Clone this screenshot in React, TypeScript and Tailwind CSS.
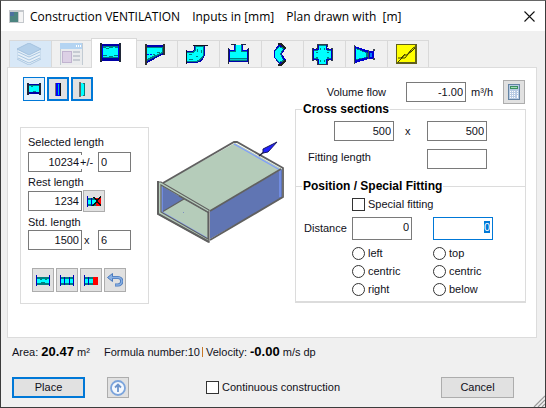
import { ReactNode, useState } from 'react'
import clsx from 'clsx'

type IconProps = { className?: string }

const StraightIcon = ({ className = 'h-[19px] w-[21px]' }: IconProps) => (
  <svg viewBox="0 0 21 19" className={className} shapeRendering="crispEdges">
    <path d="M1 1h19v17H1z" fill="#0000a8" />
    <path d="M2 3h17v12H2z" fill="#008080" />
    <path d="M2 4h17v10H2z" fill="#00ffff" />
    <path d="M3 4h3v1H3zM9 4h4v1H9zM15 4h3v1h-3zM6 5h3v1H6zM3 12h4v1H3zM9 13h4v1H9zM14 12h4v1h-4z" fill="#008080" />
    <path d="M0 0h2v19H0zM19 0h2v19h-2z" fill="#202838" />
    <path d="M2 3h1v12H2zM18 3h1v12h-1z" fill="#0000ff" />
  </svg>
)

const ReducerIcon = () => (
  <svg viewBox="0 0 20 21" className="h-[21px] w-5" shapeRendering="crispEdges">
    <path d="M1 1h18v9L2 19z" fill="#0000b0" />
    <path d="M2 3h16v6L2 17z" fill="#008080" />
    <path d="M2 4h15v4L2 15z" fill="#00ffff" />
    <path d="M2 10h2v1H2zM5 10h2v1H5z" fill="#0000ff" />
    <path d="M8 10h2v1H8zM12 8h3v1h-3zM9 3h4v1H9z" fill="#008080" />
    <path d="M0 0h2v21H0zM18 0h2v11h-2z" fill="#303030" />
  </svg>
)

const BendIcon = () => (
  <svg viewBox="0 0 22 19" className="h-[19px] w-[22px]" shapeRendering="crispEdges">
    <path d="M8 1h11v9l-2 4-3 3-4 1H1V6h5l2-2z" fill="#0000b0" />
    <path d="M9 1h9v9l-2 4-3 2-3 1H1V7h5l3-2z" fill="#008080" />
    <path d="M10 2h7v8l-2 3-3 2-3 1H1V8h6l3-2z" fill="#00ffff" />
    <path d="M3 9h3v1H3zM3 14h4v1H3zM11 4h1v3h-1zM15 5h1v3h-1zM10 11h2v1h-2z" fill="#008080" />
    <path d="M7 0h15v1H7zM0 5h1v14H0z" fill="#101020" />
  </svg>
)

const TeeIcon = () => (
  <svg viewBox="0 0 21 20" className="h-5 w-[21px]" shapeRendering="crispEdges">
    <path d="M6 1h9v5h5v12H1V6h5z" fill="#008080" />
    <path d="M8 1h5v7h6v6H2V8h6z" fill="#00ffff" />
    <path d="M2 15h17v1H2z" fill="#00c8c8" />
    <path d="M6 1h1v5H6zM14 1h1v5h-1zM2 6h5v1H2zM14 6h5v1h-5z" fill="#0000e0" />
    <path d="M2 17h17v1H2z" fill="#0000a8" />
    <path d="M0 4h1v16H0zM20 4h1v16h-1zM3 0h5v1H3zM13 0h5v1h-5z" fill="#202840" />
    <path d="M1 5h1v13H1zM19 5h1v13h-1z" fill="#0000c0" />
  </svg>
)

const YPieceIcon = () => (
  <svg viewBox="0 0 13 23" className="h-[23px] w-[13px]" shapeRendering="crispEdges">
    <path d="M5 1h3l4 4-4 6 4 6-4 4H5l-5-7V8z" fill="#0000c0" />
    <path d="M5 3l5 2-3 6 3 7-5 2-4-6V8z" fill="#008080" />
    <path d="M5 4l4 2-3 5 3 6-4 2-4-5V8z" fill="#00ffff" />
    <path d="M4 0h3l5 4v2h-2L6 2H4zM4 23h3l5-4v-2h-2l-4 4H4z" fill="#202020" />
  </svg>
)

const CrossIcon = () => (
  <svg viewBox="0 0 21 21" className="h-[21px] w-[21px]" shapeRendering="crispEdges">
    <path d="M5 0h11v3h-1v1h2v1h2V4h2v13h-2v-1h-2v1h-1v4H5v-4H4v-1H2v1H0V4h2v1h2V4h1z" fill="#303848" />
    <path d="M6 1h9v4h5v11h-5v4H6v-4H1V5h5z" fill="#0000c8" />
    <path d="M7 1h7v5h5v9h-5v5H7v-5H2V6h5z" fill="#008080" />
    <path d="M7 2h7v4h1v1h4v7h-4v1h-1v5H7v-5H6v-1H2V7h4V6h1z" fill="#00ffff" />
    <path d="M8 4h1v2H8zM12 4h1v2h-1zM4 8h2v1H4zM15 8h2v1h-2zM4 13h2v1H4zM15 13h2v1h-2zM8 16h1v2H8zM12 16h1v2h-1z" fill="#008080" />
  </svg>
)

const ConeIcon = () => (
  <svg viewBox="0 0 21 19" className="h-[19px] w-[21px]" shapeRendering="crispEdges">
    <path d="M1 1l14 5h5v8h-5L1 18z" fill="#0000d0" />
    <path d="M2 3l12 5v4L2 15z" fill="#008080" />
    <path d="M2 4l10 4v4L2 14z" fill="#00ffff" />
    <path d="M16 8h2v4h-2z" fill="#0080ff" />
    <path d="M0 0h1v19H0zM14 5h1v9h-1zM19 4h2v2h-2zM19 13h2v2h-2z" fill="#404850" />
  </svg>
)

const DamperIcon = () => (
  <svg viewBox="0 0 21 20" className="h-5 w-[21px]">
    <path d="M0 0h21v20H0z" fill="#60601c" />
    <path d="M1 1h18v17H1z" fill="#ffff00" />
    <path d="M2 14h3l3-3h3l6-7 2-1M2 18l4-4h3l4-5 2-1 4-4M6 14l3-4M12 10l3-4" fill="none" stroke="#3c3c00" />
  </svg>
)

const LayersIcon = () => (
  <svg viewBox="0 0 24 22" className="h-[22px] w-6">
    <path d="M0 6v10l12 6 12-6V6L12 11z" fill="#e6f0f8" stroke="#adc8e2" />
    <path d="M0 6l12-6 12 6-12 6z" fill="#b4d0ea" stroke="#a4c2df" />
    <path d="M1 9l11 5 11-5M1 12l11 5 11-5M1 15l11 5 11-5" fill="none" stroke="#a9c6e2" />
  </svg>
)

const FormIcon = () => (
  <svg viewBox="0 0 24 22" className="h-[22px] w-6" shapeRendering="crispEdges">
    <path d="M1 0h22v22H1z" fill="#e9ebed" stroke="#c2cbd3" />
    <path d="M1 0h22v6H1z" fill="#b4d4f2" />
    <path d="M17 2h1v2h-1zM19 2h1v2h-1zM21 2h1v2h-1z" fill="#fff" />
    <path d="M3 8h9v11H3z" fill="#dcd0e5" stroke="#c1b3d0" />
    <path d="M14 8h7v2h-7zM14 12h7v2h-7zM14 16h7v2h-7z" fill="#c6cbd2" />
  </svg>
)

const PlateIcon = ({ wide }: { wide?: boolean }) => (
  <svg viewBox="0 0 6 15" className="h-[15px] w-[6px]" shapeRendering="crispEdges">
    <path d={wide ? 'M0 0h2v15H0z' : 'M0 1h1v13H0z'} fill="#707070" />
    <path d="M1 1h4v13H1z" fill={wide ? '#00ffff' : '#0000ff'} />
    <path d={wide ? 'M1 1h1v13H1zM4 1h1v1H4zM4 13h1v1H4z' : 'M3 2h1v11H3z'} fill={wide ? '#606060' : '#00c0c0'} />
    <path d="M5 1h1v13H5z" fill={wide ? '#008080' : '#101010'} />
  </svg>
)

const DuctIcon = ({ kind }: { kind: 'full' | 'split' | 'rest' | 'none' }) => (
  <svg viewBox="0 0 14 11" className="h-[11px] w-[14px]" shapeRendering="crispEdges">
    <path d="M0 2h14v8H0z" fill="#008080" />
    <path d="M1 4h12v4H1z" fill="#00ffff" />
    {kind === 'full' && <path d="M4 4h2v1H4zM9 4h2v1H9zM5 7h4v1H5z" fill="#008080" />}
    {kind !== 'full' && <path d="M4 2h1v8H4zM9 2h1v8H9z" fill="#0000c0" />}
    {(kind === 'rest' || kind === 'none') && <path d="M9 2h5v8H9z" fill="#ff0000" />}
    <path d="M0 0h1v11H0z" fill="#0000c0" />
    {(kind === 'full' || kind === 'split') && <path d="M13 0h1v11h-1z" fill="#0000c0" />}
    {kind === 'none' && <path d="M7 1l7 9M14 0L6 10" stroke="#101010" strokeWidth="1.5" />}
  </svg>
)

const UndoIcon = () => (
  <svg viewBox="0 0 16 14" className="h-[14px] w-4">
    <path d="M5 4.5h6a3.5 3.5 0 0 1 0 7.5H8" fill="none" stroke="#4878bc" strokeWidth="3.2" />
    <path d="M0.5 4.5L5.5 0.5v8z" fill="#88b0e4" stroke="#4878bc" />
    <path d="M4 4.5h7a3.5 3.5 0 0 1 0 7.5H8.5" fill="none" stroke="#88b0e4" strokeWidth="1.5" />
  </svg>
)

const CalculatorIcon = () => (
  <svg viewBox="0 0 12 16" className="h-4 w-3" shapeRendering="crispEdges">
    <path d="M0 0h12v16H0z" fill="#6484a4" />
    <path d="M1 1h10v14H1z" fill="#b8cce4" />
    <path d="M2 2h8v3H2z" fill="#3c9060" />
    <path d="M3 3h6v1H3z" fill="#a8dcb8" />
    <path d="M2 7h1v1H2zM4 7h1v1H4zM6 7h1v1H6zM9 7h1v1H9zM2 9h1v1H2zM4 9h1v1H4zM6 9h1v1H6zM9 9h1v1H9zM2 11h1v1H2zM4 11h1v1H4zM6 11h1v1H6zM9 11h1v3H9zM2 13h1v1H2zM4 13h1v1H4zM6 13h1v1H6z" fill="#fff" />
  </svg>
)

const UpIcon = () => (
  <svg viewBox="0 0 16 16" className="size-4">
    <circle cx="8" cy="8" r="7" fill="#f4f8fd" stroke="#7ba4dc" strokeWidth="1.8" />
    <path d="M8 12V5M5 7.5L8 4.5l3 3" fill="none" stroke="#6c94cc" strokeWidth="1.8" />
  </svg>
)

const DuctDrawing = () => (
  <svg viewBox="11 12 130 104" className="h-[104px] w-[130px] flex-none">
    <path d="M17 54L89 14l47 26-72 42z" fill="#b5ccba" />
    <path d="M64 82l72-42v29l-72 41z" fill="#6075b3" />
    <path d="M15 55l48 28v27L15 83z" fill="#b5ccba" />
    <path d="M16 57l22 13-22 13z" fill="#6075b3" />
    <path d="M16 83l22-13" stroke="#606060" strokeWidth="1.2" />
    <path d="M33 67l30 17" stroke="#606060" strokeWidth="1.2" />
    <path d="M16 56v27l45 26M88 15l46 26v27" fill="none" stroke="#7d9cff" strokeWidth="1.2" />
    <path d="M17 54L88 13h3l46 26v29l-73 43M64 82l71-42" fill="none" stroke="#606060" strokeWidth="1.8" />
    <path d="M12 53l3 0 48 28v32L12 85zM15 56v27l47 27V83z" fill="#b5ccba" fillRule="evenodd" stroke="#606060" strokeWidth="1.2" />
    <path d="M12 52v33l51 28" fill="none" stroke="#606060" strokeWidth="2" />
    <path d="M113 27l6-5" stroke="#202040" strokeWidth="1.5" />
    <path d="M117 20l14-7-9 10-5 1z" fill="#2020ff" stroke="#181860" />
    <path d="M37 83h1v1h-1z" fill="#7d90c0" />
  </svg>
)

const tabs: { name: string; icon: ReactNode }[] = [
  { name: 'Layers', icon: <LayersIcon /> },
  { name: 'Properties', icon: <FormIcon /> },
  { name: 'Straight duct', icon: <StraightIcon /> },
  { name: 'Reducer', icon: <ReducerIcon /> },
  { name: 'Bend', icon: <BendIcon /> },
  { name: 'Tee', icon: <TeeIcon /> },
  { name: 'Branch', icon: <YPieceIcon /> },
  { name: 'Cross', icon: <CrossIcon /> },
  { name: 'Cone', icon: <ConeIcon /> },
  { name: 'Damper', icon: <DamperIcon /> },
]

const IconButton = ({ label, className, children }: { label: string; className?: string; children: ReactNode }) => (
  <button
    type="button"
    aria-label={label}
    className={clsx('flex w-[22px] flex-none items-center justify-center', className ?? 'h-6 border border-[#adadad] bg-[#e1e1e1]')}
  >
    {children}
  </button>
)

const field = 'h-5 border border-[#7a7a7a] bg-white px-0.5 outline-none'

const Radios = ({ name, options }: { name: string; options: string[] }) => (
  <div className="flex w-[81px] flex-col gap-[5px]">
    {options.map((option) => (
      <label key={option} className="flex h-[13px] items-center gap-[3px]">
        <input type="radio" name={name} className="size-[13px] appearance-none rounded-full border border-[#333] bg-white checked:border-4" />
        {option}
      </label>
    ))}
  </div>
)

const Checkbox = ({ label }: { label: string }) => (
  <label className="flex h-[13px] items-center gap-[3px]">
    <input type="checkbox" className="size-[13px] appearance-none border border-[#333] bg-white checked:bg-[#0078d7]" />
    {label}
  </label>
)

const TitleBar = () => (
  <header className="flex h-[30px] items-center bg-white px-2 font-['Open_Sans',sans-serif] text-[12px] text-black">
    <svg viewBox="0 0 15 13" className="mr-[6px] h-[13px] w-[15px]" shapeRendering="crispEdges">
      <path d="M0 0h15v13H0z" fill="#c4c8cc" />
      <path d="M1 2h8v10H1z" fill="#4c8480" />
      <path d="M1 2h4v4H1z" fill="#4c70a0" />
      <path d="M10 2h4v10h-4z" fill="#f4f4f4" />
    </svg>
    <h1 className="flex flex-1 gap-3 whitespace-pre">
      <span>Construction VENTILATION</span>
      <span>Inputs in [mm]</span>
      <span>Plan drawn with  [m]</span>
    </h1>
    <button type="button" aria-label="Close" className="p-0.5">
      <svg viewBox="0 0 11 11" className="size-[11px]">
        <path d="M0.5 0.5l10 10M10.5 0.5l-10 10" stroke="#111" strokeWidth="1.1" />
      </svg>
    </button>
  </header>
)

const LengthPanel = () => (
  <section className="mt-[26px] border border-[#dcdcdc] pt-2 pr-[17px] pb-[11px] pl-[7px]">
    <label htmlFor="selected" className="block h-4 leading-[12px]">Selected length</label>
    <div className="flex items-center">
      <input id="selected" defaultValue="10234" className={clsx(field, 'w-[54px] text-right')} />
      <label htmlFor="tolerance" className="relative -ml-0.5 w-[18px] bg-white leading-[14px]">+/-</label>
      <input id="tolerance" defaultValue="0" className={clsx(field, 'w-[33px]')} />
    </div>
    <label htmlFor="rest" className="mt-1 block h-[14px] leading-[12px]">Rest length</label>
    <div className="flex items-center gap-px">
      <input id="rest" defaultValue="1234" className={clsx(field, 'w-[54px] text-right')} />
      <IconButton label="Remove rest" className="h-[22px] border border-[#adadad] bg-[#e1e1e1]">
        <DuctIcon kind="none" />
      </IconButton>
    </div>
    <label htmlFor="std" className="mt-1 block h-[14px] leading-[12px]">Std. length</label>
    <div className="flex items-center">
      <input id="std" defaultValue="1500" className={clsx(field, 'w-[54px] text-right')} />
      <label htmlFor="count" className="w-4 pl-0.5">x</label>
      <input id="count" defaultValue="6" className={clsx(field, 'w-[33px]')} />
    </div>
    <div className="mt-[18px] ml-1 flex gap-0.5">
      <IconButton label="One piece"><DuctIcon kind="full" /></IconButton>
      <IconButton label="Split"><DuctIcon kind="split" /></IconButton>
      <IconButton label="Split with rest"><DuctIcon kind="rest" /></IconButton>
      <IconButton label="Undo"><UndoIcon /></IconButton>
    </div>
  </section>
)

const SizePanel = () => (
  <div className="w-[231px] flex-none">
    <div className="flex h-6 items-center justify-end pr-px">
      <label htmlFor="flow" className="mr-5">Volume flow</label>
      <input id="flow" defaultValue="-1.00" className={clsx(field, 'w-[60px] text-right')} />
      <span className="mr-2 w-[29px] pl-[5px]">m³/h</span>
      <IconButton label="Calculate"><CalculatorIcon /></IconButton>
    </div>

    <fieldset className="border border-b-0 border-[#dcdcdc] pb-[17px]">
      <legend className="ml-[6px] px-px text-[12px] leading-[10px] font-bold text-black">Cross sections</legend>
      <div className="flex items-center pt-[7px] pl-[38px]">
        <input aria-label="Width" defaultValue="500" className={clsx(field, 'w-[60px] text-right')} />
        <span className="w-[33px] pl-[11px]">x</span>
        <input aria-label="Height" defaultValue="500" className={clsx(field, 'w-[60px] text-right')} />
      </div>
      <div className="mt-2 flex items-start pl-3">
        <label htmlFor="fitting" className="w-[119px] leading-4">Fitting length</label>
        <input id="fitting" className={clsx(field, 'w-[60px] text-right')} />
      </div>
    </fieldset>

    <fieldset className="-mt-[5px] border border-b-2 border-[#dcdcdc] pb-[5px] pl-2">
      <legend className="-ml-0.5 px-px text-[12px] leading-[10px] font-bold whitespace-nowrap text-black">Position / Special Fitting</legend>
      <div className="pt-[7px] pl-12">
        <Checkbox label="Special fitting" />
      </div>
      <div className="mt-[6px] flex items-center">
        <label htmlFor="distance" className="w-12">Distance</label>
        <input id="distance" defaultValue="0" className="mr-[21px] h-[23px] w-[60px] border border-[#7a7a7a] bg-white px-0.5 pb-1 text-right outline-none" />
        <input
          aria-label="Vertical distance"
          defaultValue="0"
          autoFocus
          onFocus={(e) => e.target.select()}
          className="h-[23px] w-[60px] border border-[#0078d7] bg-white px-0.5 pb-1 text-right outline-none selection:bg-[#0078d7] selection:text-white"
        />
      </div>
      <div className="mt-[7px] flex pl-12">
        <Radios name="horizontal" options={['left', 'centric', 'right']} />
        <Radios name="vertical" options={['top', 'centric', 'below']} />
      </div>
    </fieldset>
  </div>
)

export default function App() {
  const [active, setActive] = useState(2)

  return (
    <div className="relative flex min-h-screen flex-col border border-[#3c3c3c] border-t-[#666] bg-[#f0f0f0] font-['Liberation_Sans',Arial,sans-serif] text-[11px] leading-[13px] text-[#101020]">
      <TitleBar />

      <div role="tablist" className="mr-2 ml-2 flex h-9 items-end">
        {tabs.map((tab, index) => (
          <button
            key={tab.name}
            type="button"
            role="tab"
            aria-label={tab.name}
            aria-selected={index === active}
            onClick={() => setActive(index)}
            className={clsx(
              'flex items-center justify-center border-t border-l border-[#d9d9d9] last:border-r',
              index === active ? 'relative -mx-0.5 -mb-px h-[30px] w-[46px] border-r bg-white pr-2 pb-0.5' : 'h-[27px] w-[42px] pr-1',
              index === 0 && 'bg-[#d8e8f7]',
            )}
          >
            {tab.icon}
          </button>
        ))}
      </div>

      <main className="mr-2 ml-[6px] flex justify-between border border-[#dcdcdc] bg-white pt-[9px] pr-[10px] pb-[33px] pl-3">
        <div className="flex-none">
          <div className="ml-[3px] flex gap-0.5">
            <IconButton label="Duct" className="h-6 border border-[#0078d7] bg-[#e5f1fb]"><StraightIcon className="h-3 w-[14px]" /></IconButton>
            <IconButton label="Flange" className="h-6 border-2 border-[#0078d7] bg-[#e1e1e1]"><PlateIcon /></IconButton>
            <IconButton label="End cap" className="h-6 border-2 border-[#0078d7] bg-[#e1e1e1]"><PlateIcon wide /></IconButton>
          </div>
          <LengthPanel />
        </div>
        <div className="mt-16">
          <DuctDrawing />
        </div>
        <div className="mt-[3px]">
          <SizePanel />
        </div>
      </main>

      <div className="mt-[6px] flex h-4 items-center pl-[11px] whitespace-nowrap">
        <span className="w-[92px]">Area: <b className="text-[13px] text-black">20.47</b> m²</span>
        <span className="w-[98px]">Formula number:10</span>
        <span className="mr-[3px] h-[10px] w-px bg-[#c87828]" />
        <span>Velocity: <b className="text-[13px] text-black">-0.00</b> m/s dp</span>
      </div>

      <footer className="mt-[17px] flex h-[21px] items-center pr-[31px] pl-[11px]">
        <button type="button" className="h-[21px] w-[73px] border-2 border-[#0078d7] bg-[#e1e1e1]">Place</button>
        <div className="ml-[22px]">
          <IconButton label="Move up" className="h-[21px] border border-[#adadad] bg-[#e1e1e1]"><UpIcon /></IconButton>
        </div>
        <div className="ml-[77px] flex-1">
          <Checkbox label="Continuous construction" />
        </div>
        <button type="button" className="h-[21px] w-[73px] border border-[#adadad] bg-[#e1e1e1]">Cancel</button>
      </footer>

      <svg viewBox="0 0 12 12" className="absolute right-0 bottom-0 size-3">
        <path d="M1 12L12 1M5 12l7-7M9 12l3-3" stroke="#999" strokeWidth="1.2" />
      </svg>
    </div>
  )
}
